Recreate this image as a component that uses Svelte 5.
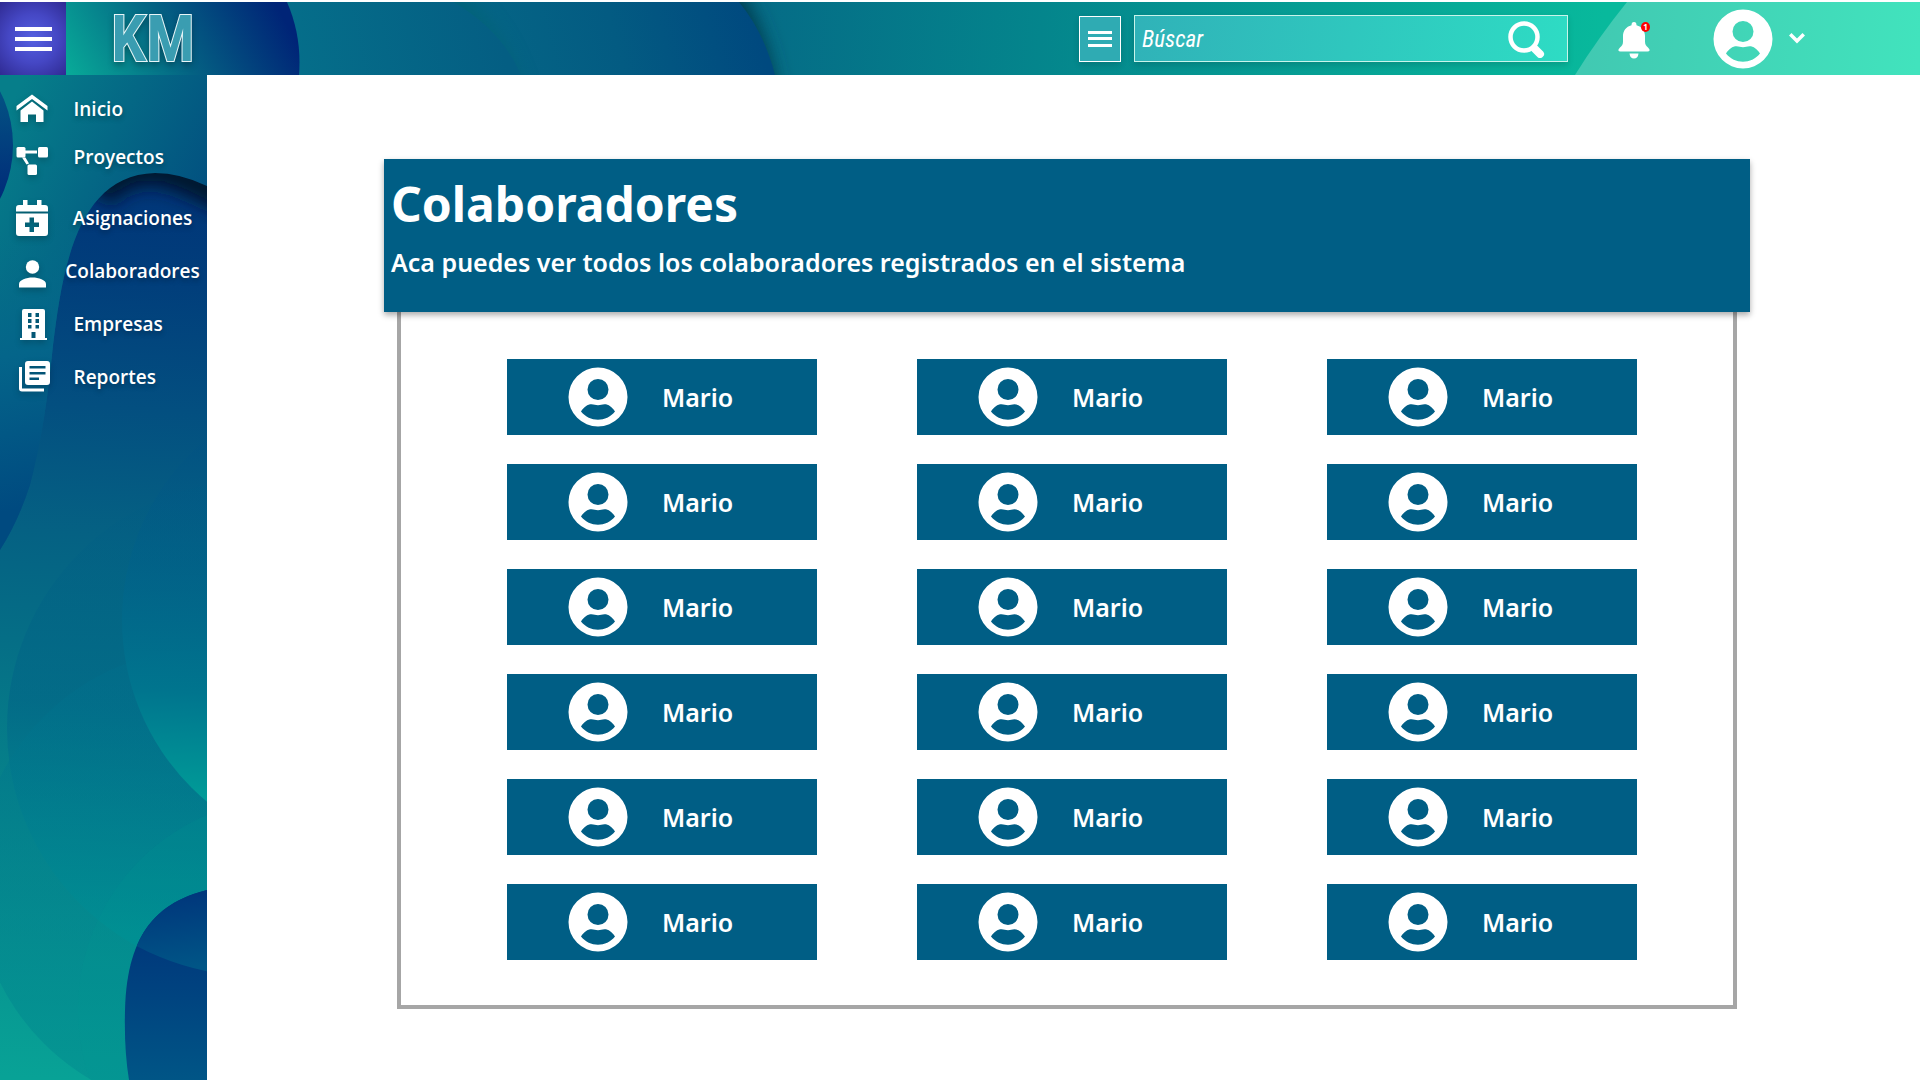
<script>
  const mainLinks = [
    { label: 'Inicio', icon: 'home' },
    { label: 'Proyectos', icon: 'projects' }
  ];
  const moreLinks = [
    { label: 'Asignaciones', icon: 'calendar' },
    { label: 'Colaboradores', icon: 'person' },
    { label: 'Empresas', icon: 'building' },
    { label: 'Reportes', icon: 'reports' }
  ];
  const people = Array.from({ length: 18 }, (_, id) => ({ id, name: 'Mario' }));
</script>

{#snippet avatar()}
  <svg class="avatar" viewBox="0 0 60 60" aria-hidden="true">
    <path
      fill="#fff"
      fill-rule="evenodd"
      d="M30 .5a29.5 29.5 0 1 1 0 59a29.5 29.5 0 1 1 0-59z M30 12a10.5 10.5 0 1 0 0 21a10.5 10.5 0 1 0 0-21z M13 44.5C16 40 19.500 37.300 23.500 37.300C26 37.300 27.500 38.200 30 38.200C32.500 38.200 34 37.300 36.500 37.300C40.500 37.300 44 40 47 44.500C42.500 50 36.500 52.700 30 52.700C23.500 52.700 17.500 50 13 44.500z"
    />
  </svg>
{/snippet}

{#snippet navIcon(name)}
  <svg class="nav-icon" viewBox="0 0 36 36" fill="#fff" aria-hidden="true">
    {#if name === 'home'}
      <path d="M18 3.500L33.500 15v4.500L18 8L2.500 19.500V15z" />
      <path d="M18 10.500L29.500 19.500v11.500H22V23.500h-8v7.500H6.500V19.500z" />
    {:else if name === 'projects'}
      <rect x="2.500" y="8" width="9" height="10.500" rx="1.500" />
      <rect x="24" y="8" width="10" height="10.500" rx="1.500" />
      <rect x="13.500" y="25.500" width="9.500" height="10.500" rx="1.500" />
      <path d="M10 11.500h13v3H10z M8 18.500h3.500l3.500 6l-2.500 1z" />
    {:else if name === 'calendar'}
      <path d="M2 11.500V8q0-3 3-3h4V0h4.500v5h9.500V0h4.500v5H31q3 0 3 3v3.500z" />
      <path fill-rule="evenodd" d="M2 13.500h32V33q0 3-3 3H5q-3 0-3-3z M15.500 17.500v5h-4.500v4.500h4.500v5H20v-5h5v-4.500h-5v-5z" />
    {:else if name === 'person'}
      <circle cx="18.500" cy="14" r="6.700" />
      <path d="M5 34.500v-3.500C5 27 12.500 24.500 18.500 24.500s13.500 2.500 13.500 6.500V34.500z" />
    {:else if name === 'building'}
      <path
        fill-rule="evenodd"
        d="M10 3h19q2 0 2 2v27H33v2H6v-2H8V5q0-2 2-2z M14 7v4H17.500V7z M21.500 7v4H25V7z M14 13v4H17.500v-4z M21.500 13v4H25v-4z M14 19v3.500H17.500V19z M21.500 19v3.500H25V19z M17.500 26v6h4v-6z"
      />
    {:else}
      <path d="M5 8h3v21.500h22v3H8q-3 0-3-3z" />
      <path
        fill-rule="evenodd"
        d="M14 2h19q3 0 3 3v18q0 3-3 3h-19q-3 0-3-3V5q0-3 3-3z M15.500 7v2.500h16V7z M15.500 13v2.500h16V13z M15.500 18.500V21h9.500v-2.500z"
      />
    {/if}
  </svg>
{/snippet}

{#snippet navList(links)}
  <ul>
    {#each links as link (link.label)}
      <li>
        <a href="#{link.icon}">
          {@render navIcon(link.icon)}
          <span class="slot"><span class="label">{link.label}</span></span>
        </a>
      </li>
    {/each}
  </ul>
{/snippet}

<div class="app">
  <header class="topbar">
    <svg class="backdrop" viewBox="0 0 1920 73" preserveAspectRatio="none" aria-hidden="true">
      <defs>
        <linearGradient id="h-base" gradientUnits="userSpaceOnUse" x1="740" y1="0" x2="1600" y2="73">
          <stop offset="0" stop-color="#056a86" />
          <stop offset=".35" stop-color="#04858c" />
          <stop offset="1" stop-color="#08b99c" />
        </linearGradient>
        <linearGradient id="h-mid" gradientUnits="userSpaceOnUse" x1="480" y1="73" x2="750" y2="0">
          <stop offset="0" stop-color="#056686" />
          <stop offset=".5" stop-color="#035b82" />
          <stop offset="1" stop-color="#00497f" />
        </linearGradient>
        <linearGradient id="h-inner" gradientUnits="userSpaceOnUse" x1="299" y1="73" x2="500" y2="30">
          <stop offset="0" stop-color="#056e8a" />
          <stop offset="1" stop-color="#045e83" />
        </linearGradient>
        <linearGradient id="h-blob" gradientUnits="userSpaceOnUse" x1="76" y1="84" x2="262" y2="-22">
          <stop offset="0" stop-color="#08a998" />
          <stop offset=".5" stop-color="#046283" />
          <stop offset="1" stop-color="#002477" />
        </linearGradient>
        <linearGradient id="h-light" gradientUnits="userSpaceOnUse" x1="1590" y1="0" x2="1920" y2="30">
          <stop offset="0" stop-color="#41c9b2" />
          <stop offset="1" stop-color="#41e3bd" />
        </linearGradient>
        <filter id="h-soft" x="-20%" y="-100%" width="140%" height="300%"><feGaussianBlur stdDeviation="9" /></filter>
      </defs>
      <rect width="1920" height="73" fill="url(#h-base)" />
      <path d="M640-30H728C758 10 772 50 780 110H640z" fill="#023c50" filter="url(#h-soft)" />
      <path d="M0 0H739C757 22 768 46 775 73H0z" fill="url(#h-mid)" />
      <path d="M300-30H442C484 8 510 40 524 90H300z" fill="#06606f" opacity=".5" filter="url(#h-soft)" />
      <path d="M0 0H453C485 18 509 44 521 73H0z" fill="url(#h-inner)" />
      <path d="M0 0H287C297 23 301 47 299 73H0z" fill="url(#h-blob)" />
      <path d="M1627 0H1920V73H1575Q1598 36 1627 0z" fill="url(#h-light)" />
    </svg>

    <button class="menu" aria-label="Menú">
      <svg viewBox="0 0 66 73" aria-hidden="true">
        <path d="M15 25h37v4H15z M15 35h37v4H15z M15 45h37v4H15z" fill="#fff" />
      </svg>
    </button>
    <span class="logo">KM</span>

    <button class="filter" aria-label="Opciones">
      <svg viewBox="0 0 24 18" aria-hidden="true">
        <path d="M0 1h24v3H0z M0 7h24v3H0z M0 14h24v3H0z" fill="#fff" />
      </svg>
    </button>
    <form class="search" role="search">
      <input type="search" placeholder="Búscar" aria-label="Búscar" />
      <button type="button" aria-label="Enviar búsqueda">
        <svg viewBox="0 0 38 38" fill="none" stroke="#fff" aria-hidden="true">
          <circle cx="16" cy="17" r="13.500" stroke-width="4.500" />
          <path d="M27 29l5 5" stroke-width="8" stroke-linecap="round" />
        </svg>
      </button>
    </form>
    <button class="bell" aria-label="Notificaciones">
      <svg viewBox="0 0 32 37" fill="#fff" aria-hidden="true">
        <path d="M16 0q2.500 0 2.500 3.200C24 4.500 27 9 27 14v5.500c0 3 1 4 3 6q2 1.800 1.600 3Q31.300 29.500 29.500 29.500h-27Q.700 29.500.400 28.500Q0 27.300 2 25.500c2-2 3-3 3-6V14C5 9 8 4.500 13.500 3.200Q13.500 0 16 0z M11.500 31.500h9Q20 36.500 16 36.500T11.500 31.500z" />
      </svg>
      <span class="badge">1</span>
    </button>
    <button class="account" aria-label="Cuenta">
      {@render avatar()}
      <svg class="chevron" viewBox="0 0 16 11" aria-hidden="true">
        <path d="M2.500 2.500l5.500 5.500l5.500-5.500" fill="none" stroke="#fff" stroke-width="3.500" stroke-linecap="square" />
      </svg>
    </button>
  </header>

  <nav class="sidebar" aria-label="Principal">
    <svg class="backdrop" viewBox="0 75 207 1005" preserveAspectRatio="none" aria-hidden="true">
      <defs>
        <linearGradient id="s-base" gradientUnits="userSpaceOnUse" x1="120" y1="170" x2="70" y2="1080">
          <stop offset="0" stop-color="#003478" />
          <stop offset=".12" stop-color="#013e7b" />
          <stop offset=".26" stop-color="#034f80" />
          <stop offset=".4" stop-color="#056183" />
          <stop offset=".52" stop-color="#056e86" />
          <stop offset=".72" stop-color="#06868b" />
          <stop offset="1" stop-color="#08a296" />
        </linearGradient>
        <linearGradient id="s-top" gradientUnits="userSpaceOnUse" x1="20" y1="85" x2="210" y2="180">
          <stop offset="0" stop-color="#067e8a" />
          <stop offset="1" stop-color="#025180" />
        </linearGradient>
        <linearGradient id="s-left" gradientUnits="userSpaceOnUse" x1="0" y1="230" x2="60" y2="500">
          <stop offset="0" stop-color="#04708a" stop-opacity="0" />
          <stop offset=".45" stop-color="#04658a" />
          <stop offset="1" stop-color="#004a80" />
        </linearGradient>
        <linearGradient id="s-disc" x1="0" y1="0" x2="0" y2="1">
          <stop offset="0" stop-color="#056a8a" />
          <stop offset=".8" stop-color="#002577" />
        </linearGradient>
        <linearGradient id="s-a" gradientUnits="userSpaceOnUse" x1="180" y1="440" x2="165" y2="800">
          <stop offset="0" stop-color="#005084" stop-opacity=".2" />
          <stop offset=".4" stop-color="#01648a" stop-opacity=".7" />
          <stop offset=".7" stop-color="#00758e" />
          <stop offset="1" stop-color="#009c98" />
        </linearGradient>
        <linearGradient id="s-b" gradientUnits="userSpaceOnUse" x1="150" y1="500" x2="120" y2="960">
          <stop offset="0" stop-color="#005c84" stop-opacity=".2" />
          <stop offset=".45" stop-color="#026787" stop-opacity=".7" />
          <stop offset="1" stop-color="#009e98" />
        </linearGradient>
        <linearGradient id="s-c" gradientUnits="userSpaceOnUse" x1="0" y1="650" x2="0" y2="1080">
          <stop offset="0" stop-color="#006e8c" stop-opacity=".35" />
          <stop offset="1" stop-color="#038e90" stop-opacity=".6" />
        </linearGradient>
        <linearGradient id="s-low" gradientUnits="userSpaceOnUse" x1="160" y1="930" x2="160" y2="1080">
          <stop offset="0" stop-color="#00367b" />
          <stop offset="1" stop-color="#005586" />
        </linearGradient>
        <linearGradient id="s-cap" gradientUnits="userSpaceOnUse" x1="160" y1="890" x2="170" y2="970">
          <stop offset="0" stop-color="#00347b" />
          <stop offset="1" stop-color="#005586" />
        </linearGradient>
        <filter id="s-soft" x="-50%" y="-50%" width="200%" height="200%"><feGaussianBlur stdDeviation="9" /></filter>
        <clipPath id="s-clip"><circle cx="255" cy="728" r="248" /></clipPath>
      </defs>
      <rect y="75" width="207" height="1005" fill="url(#s-base)" />
      <path d="M100 196C118 172 140 170 158 171Q182 174 240 206" fill="none" stroke="#00132f" stroke-width="30" filter="url(#s-soft)" />
      <circle cx="255" cy="728" r="248" fill="url(#s-b)" />
      <circle cx="207" cy="880" r="231" fill="url(#s-c)" />
      <circle cx="290" cy="1010" r="212" fill="#009a96" opacity=".15" />
      <circle cx="359" cy="620" r="237" fill="url(#s-a)" />
      <path d="M0 75H207V186Q180 173 155 173C75 175 62 275 53 345C48 395 42 440 30 485Q18 522 0 550z" fill="url(#s-top)" />
      <path d="M0 75H207V186Q180 173 155 173C75 175 62 275 53 345C48 395 42 440 30 485Q18 522 0 550z" fill="url(#s-left)" />
      <circle cx="-105" cy="145" r="118" fill="url(#s-disc)" />
      <path d="M207 890C160 902 127 930 125 1010Q124 1050 129 1080H207z" fill="url(#s-low)" />
      <path d="M207 890C160 902 127 930 125 1010Q124 1050 129 1080H207z" fill="url(#s-cap)" clip-path="url(#s-clip)" />
    </svg>
    {@render navList(mainLinks)}
    {@render navList(moreLinks)}
  </nav>

  <main>
    <section class="banner">
      <h1>Colaboradores</h1>
      <p>Aca puedes ver todos los colaboradores registrados en el sistema</p>
    </section>
    <section class="panel" aria-label="Colaboradores">
      {#each people as person (person.id)}
        <button class="card">
          {@render avatar()}
          <span>{person.name}</span>
        </button>
      {/each}
    </section>
  </main>
</div>

<style>
  :global(body) {
    margin: 0;
    background: #fff;
  }

  .app {
    box-sizing: border-box;
    min-height: 100vh;
    padding-top: 2px;
    display: grid;
    grid-template: auto 1fr / 207px 1fr;
    font-family: 'Noto Sans', 'Open Sans', sans-serif;
    color: #fff;
  }

  button {
    padding: 0;
    border: 0;
    background: none;
    color: inherit;
    font: inherit;
    cursor: pointer;
  }

  svg {
    display: block;
  }

  .backdrop {
    position: absolute;
    inset: 0;
    z-index: -1;
    width: 100%;
    height: 100%;
  }

  .topbar {
    position: relative;
    z-index: 0;
    grid-column: 1 / -1;
    height: 73px;
    padding-right: 115px;
    display: flex;
    align-items: center;
  }

  .menu {
    width: 66px;
    height: 73px;
    background: radial-gradient(circle at 50% 50%, #5560e0 0, #4547c4 50%, #2f2a92 100%);
  }

  .logo {
    margin-left: 45px;
    margin-right: auto;
    padding-top: 2px;
    font: 600 64px/72px 'Roboto Condensed', 'Open Sans Condensed', Roboto, sans-serif;
    color: #3a9db1;
    -webkit-text-stroke: 2px #e8f6f8;
    paint-order: stroke fill;
    filter: drop-shadow(0 3px 3px #0004);
  }

  .filter {
    box-sizing: border-box;
    width: 42px;
    height: 46px;
    margin-right: 13px;
    border: 1px solid #fff;
    background: #2fabb3;
    box-shadow: 0 3px 6px #0002;
    display: grid;
    place-items: center;
  }

  .filter svg {
    width: 24px;
    height: 18px;
  }

  .search {
    box-sizing: border-box;
    width: 434px;
    height: 47px;
    padding-right: 21px;
    border: 1px solid #c8f4ea;
    background: linear-gradient(100deg, #30b2b8, #2edcc4);
    box-shadow: 0 3px 6px #0002;
    display: flex;
    align-items: center;
  }

  .search input {
    flex: 1;
    min-width: 0;
    padding: 2px 7px 0;
    border: 0;
    outline: 0;
    background: none;
    color: #fff;
    font: italic 23px 'Roboto Condensed', 'Noto Sans', sans-serif;
  }

  .search input::placeholder {
    color: #fff;
    opacity: 1;
  }

  .search svg {
    width: 38px;
    height: 38px;
  }

  .bell {
    position: relative;
    margin: 3px 63px 0 50px;
  }

  .bell svg {
    width: 32px;
    height: 37px;
  }

  .badge {
    position: absolute;
    top: 0;
    right: 0;
    width: 9px;
    height: 10px;
    border-radius: 50%;
    background: #f00;
    font-size: 8px;
    font-weight: 700;
    line-height: 10px;
    text-align: center;
  }

  .account {
    display: flex;
    align-items: center;
    gap: 16px;
  }

  .avatar {
    width: 60px;
    height: 60px;
  }

  .chevron {
    width: 16px;
    height: 11px;
  }

  .sidebar {
    position: relative;
    z-index: 0;
    padding-top: 10px;
    display: flex;
    flex-direction: column;
    gap: 13px;
  }

  ul {
    margin: 0;
    padding: 0;
    list-style: none;
    display: flex;
    flex-direction: column;
  }

  ul + ul {
    gap: 5px;
  }

  .sidebar a {
    height: 48px;
    padding-left: 14px;
    display: flex;
    align-items: center;
    color: #fff;
    font: 600 19px/24px 'Open Sans', 'Noto Sans', sans-serif;
    text-decoration: none;
    text-shadow: 0 3px 5px #0004;
  }

  .nav-icon {
    flex: none;
    width: 36px;
    height: 36px;
    filter: drop-shadow(0 3px 3px #0003);
  }

  .slot {
    flex: 1;
    display: flex;
    justify-content: center;
    padding: 0 7px 0 15px;
  }

  .label {
    min-width: 118px;
  }

  main {
    padding: 84px 170px 71px 177px;
  }

  .banner {
    position: relative;
    height: 153px;
    box-sizing: border-box;
    padding: 15px 7px;
    background: #005e85;
    box-shadow: 0 3px 6px #0005;
  }

  h1 {
    margin: 0;
    font-size: 48px;
    font-weight: 700;
    line-height: 60px;
  }

  p {
    margin: 12px 0 0;
    font-size: 25px;
    font-weight: 600;
    line-height: 32px;
  }

  .panel {
    margin: 0 13px;
    padding: 47px 96px 45px 106px;
    border: 4px solid #a6a6a6;
    border-top: 0;
    display: grid;
    grid-template-columns: repeat(3, 1fr);
    gap: 29px 100px;
  }

  .card {
    height: 76px;
    padding-left: 61px;
    background: #005e85;
    display: flex;
    align-items: center;
    gap: 34px;
    font-size: 25px;
    font-weight: 600;
  }
</style>
